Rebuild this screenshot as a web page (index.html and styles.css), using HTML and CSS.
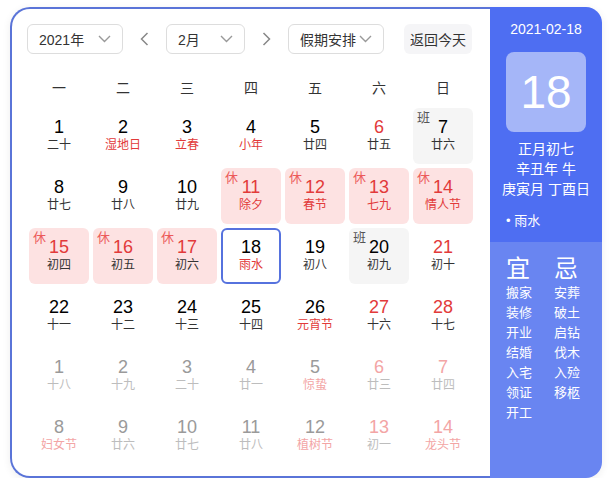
FILE: index.html
```html
<!DOCTYPE html>
<html lang="zh-CN">
<head>
<meta charset="utf-8">
<title>万年历</title>
<link rel="stylesheet" href="styles.css">
</head>
<body>
<div class="cal">
  <div class="main">
    <div class="toolbar">
      <div class="sel-box year"><span>2021年</span><svg class="chev" width="13" height="8" viewBox="0 0 13 8"><path d="M1 1l5.5 5.5L12 1" fill="none" stroke="#999" stroke-width="1.4"/></svg></div>
      <div class="arrow"><svg width="9" height="14" viewBox="0 0 9 14"><path d="M7.5 1L1.5 7l6 6" fill="none" stroke="#888" stroke-width="1.5"/></svg></div>
      <div class="sel-box month"><span>2月</span><svg class="chev" width="13" height="8" viewBox="0 0 13 8"><path d="M1 1l5.5 5.5L12 1" fill="none" stroke="#999" stroke-width="1.4"/></svg></div>
      <div class="arrow"><svg width="9" height="14" viewBox="0 0 9 14"><path d="M1.5 1l6 6-6 6" fill="none" stroke="#888" stroke-width="1.5"/></svg></div>
      <div class="sel-box holiday"><span>假期安排</span><svg class="chev" width="13" height="8" viewBox="0 0 13 8"><path d="M1 1l5.5 5.5L12 1" fill="none" stroke="#999" stroke-width="1.4"/></svg></div>
      <div class="today">返回今天</div>
    </div>
    <div class="weekdays">
      <span>一</span><span>二</span><span>三</span><span>四</span><span>五</span><span>六</span><span>日</span>
    </div>
    <div class="grid">
      <div class="day"><span class="num">1</span><span class="lun">二十</span></div>
      <div class="day"><span class="num">2</span><span class="lun fest">湿地日</span></div>
      <div class="day"><span class="num">3</span><span class="lun fest">立春</span></div>
      <div class="day"><span class="num">4</span><span class="lun fest">小年</span></div>
      <div class="day"><span class="num">5</span><span class="lun">廿四</span></div>
      <div class="day red"><span class="num">6</span><span class="lun">廿五</span></div>
      <div class="day work"><span class="tag">班</span><span class="num">7</span><span class="lun">廿六</span></div>

      <div class="day"><span class="num">8</span><span class="lun">廿七</span></div>
      <div class="day"><span class="num">9</span><span class="lun">廿八</span></div>
      <div class="day"><span class="num">10</span><span class="lun">廿九</span></div>
      <div class="day hol"><span class="tag">休</span><span class="num">11</span><span class="lun fest">除夕</span></div>
      <div class="day hol"><span class="tag">休</span><span class="num">12</span><span class="lun fest">春节</span></div>
      <div class="day hol"><span class="tag">休</span><span class="num">13</span><span class="lun fest">七九</span></div>
      <div class="day hol"><span class="tag">休</span><span class="num">14</span><span class="lun fest">情人节</span></div>

      <div class="day hol"><span class="tag">休</span><span class="num">15</span><span class="lun">初四</span></div>
      <div class="day hol"><span class="tag">休</span><span class="num">16</span><span class="lun">初五</span></div>
      <div class="day hol"><span class="tag">休</span><span class="num">17</span><span class="lun">初六</span></div>
      <div class="day sel"><span class="num">18</span><span class="lun fest">雨水</span></div>
      <div class="day"><span class="num">19</span><span class="lun">初八</span></div>
      <div class="day work"><span class="tag">班</span><span class="num">20</span><span class="lun">初九</span></div>
      <div class="day red"><span class="num">21</span><span class="lun">初十</span></div>

      <div class="day"><span class="num">22</span><span class="lun">十一</span></div>
      <div class="day"><span class="num">23</span><span class="lun">十二</span></div>
      <div class="day"><span class="num">24</span><span class="lun">十三</span></div>
      <div class="day"><span class="num">25</span><span class="lun">十四</span></div>
      <div class="day"><span class="num">26</span><span class="lun fest">元宵节</span></div>
      <div class="day red"><span class="num">27</span><span class="lun">十六</span></div>
      <div class="day red"><span class="num">28</span><span class="lun">十七</span></div>

      <div class="day other"><span class="num">1</span><span class="lun">十八</span></div>
      <div class="day other"><span class="num">2</span><span class="lun">十九</span></div>
      <div class="day other"><span class="num">3</span><span class="lun">二十</span></div>
      <div class="day other"><span class="num">4</span><span class="lun">廿一</span></div>
      <div class="day other"><span class="num">5</span><span class="lun fest">惊蛰</span></div>
      <div class="day other red"><span class="num">6</span><span class="lun">廿三</span></div>
      <div class="day other red"><span class="num">7</span><span class="lun">廿四</span></div>

      <div class="day other"><span class="num">8</span><span class="lun fest">妇女节</span></div>
      <div class="day other"><span class="num">9</span><span class="lun">廿六</span></div>
      <div class="day other"><span class="num">10</span><span class="lun">廿七</span></div>
      <div class="day other"><span class="num">11</span><span class="lun">廿八</span></div>
      <div class="day other"><span class="num">12</span><span class="lun fest">植树节</span></div>
      <div class="day other red"><span class="num">13</span><span class="lun">初一</span></div>
      <div class="day other red"><span class="num">14</span><span class="lun fest">龙头节</span></div>
    </div>
  </div>
  <div class="side">
    <div class="side-top">
      <div class="s-date">2021-02-18</div>
      <div class="s-big">18</div>
      <div class="s-lunar">
        <div>正月初七</div>
        <div>辛丑年 牛</div>
        <div>庚寅月 丁酉日</div>
      </div>
      <div class="s-term">• 雨水</div>
    </div>
    <div class="side-bot">
      <div class="yj">
        <div class="yj-col">
          <div class="yj-h">宜</div>
          <div>搬家</div><div>装修</div><div>开业</div><div>结婚</div><div>入宅</div><div>领证</div><div>开工</div>
        </div>
        <div class="yj-col">
          <div class="yj-h">忌</div>
          <div>安葬</div><div>破土</div><div>启钻</div><div>伐木</div><div>入殓</div><div>移柩</div>
        </div>
      </div>
    </div>
  </div>
</div>
</body>
</html>
```

FILE: styles.css
```css
body {
  margin: 0;
  background: #fff;
  font-family: "Liberation Sans", "Noto Sans CJK SC", sans-serif;
}

.cal {
  margin: 7px 0 0 10px;
  width: 592px;
  height: 471px;
  display: flex;
  border-radius: 20px 16px 16px 20px;
  box-shadow: 0 2px 8px rgba(0, 0, 0, 0.07);
}

.main {
  width: 480px;
  box-sizing: border-box;
  border: 2px solid #5a74d8;
  border-right: none;
  border-radius: 20px 0 0 20px;
  padding: 15px 0 0 15px;
  background: #fff;
}

.toolbar {
  display: flex;
  align-items: center;
  height: 30px;
}

.sel-box {
  height: 30px;
  box-sizing: border-box;
  border: 1px solid #dddddd;
  border-radius: 6px;
  display: flex;
  align-items: center;
  justify-content: space-between;
  padding: 0 11px;
  font-size: 14px;
  color: #333;
}

.year { width: 96px; }
.month { width: 79px; }
.holiday { width: 96px; }

.arrow {
  width: 43px;
  display: flex;
  justify-content: center;
  align-items: center;
}

.today {
  margin-left: 20px;
  width: 68px;
  height: 30px;
  border-radius: 6px;
  background: #f5f5f7;
  font-size: 14px;
  color: #333;
  display: flex;
  align-items: center;
  justify-content: center;
}

.weekdays {
  margin-top: 15px;
  height: 36px;
  display: grid;
  grid-template-columns: repeat(7, 64px);
  align-items: center;
  text-align: center;
  font-size: 14px;
  color: #333;
}

.grid {
  margin-top: 3px;
  display: grid;
  grid-template-columns: repeat(7, 64px);
  grid-auto-rows: 56px;
  row-gap: 4px;
}

.day {
  margin: 0 2px;
  position: relative;
  box-sizing: border-box;
  border-radius: 6px;
  padding-top: 8px;
  display: flex;
  flex-direction: column;
  align-items: center;
}

.num {
  font-size: 18px;
  line-height: 22px;
  color: #000;
}

.lun {
  margin-top: -1px;
  font-size: 12px;
  line-height: 16px;
  color: #333;
}

.lun.fest { color: #e23a3a; }

.red .num { color: #e23a3a; }

.hol { background: #fde2e2; }
.hol .num { color: #e23a3a; }

.work { background: #f5f5f5; }

.tag {
  position: absolute;
  left: 4px;
  top: 2px;
  font-size: 13px;
  line-height: 16px;
}

.hol .tag { color: #ec5a5a; }
.work .tag { color: #555; }

.sel {
  border: 2px solid #5672de;
  padding-top: 6px;
}

.other .num { color: #9a9a9a; }
.other .lun { color: #bdbdbd; }
.other .lun.fest { color: #f3a5a5; }
.other.red .num { color: #f3a5a5; }

.side {
  width: 112px;
  display: flex;
  flex-direction: column;
  border-radius: 0 16px 16px 0;
  overflow: hidden;
  color: #fff;
}

.side-top {
  height: 235px;
  background: #4e6ef2;
  padding-top: 12px;
  box-sizing: border-box;
}

.s-date {
  text-align: center;
  font-size: 14px;
  line-height: 20px;
}

.s-big {
  margin: 13px auto 0;
  width: 80px;
  height: 80px;
  border-radius: 8px;
  background: #a5b6f8;
  font-size: 46px;
  display: flex;
  align-items: center;
  justify-content: center;
}

.s-lunar {
  margin-top: 7px;
  text-align: center;
  font-size: 14px;
  line-height: 20px;
}

.s-term {
  margin-top: 12px;
  padding-left: 16px;
  font-size: 13px;
  line-height: 20px;
}

.side-bot {
  flex: 1;
  background: #6985f1;
  padding-top: 13px;
}

.yj {
  display: flex;
  padding-left: 16px;
}

.yj-col {
  width: 56px;
  font-size: 13px;
  line-height: 20px;
}

.yj-h {
  font-size: 24px;
  line-height: 28px;
}
```
